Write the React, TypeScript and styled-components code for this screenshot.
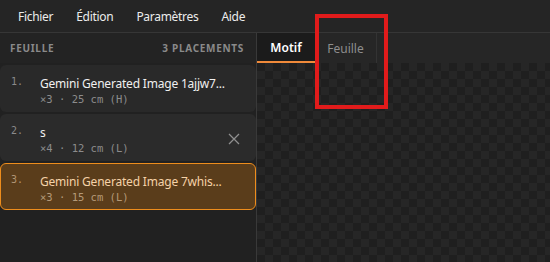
import React from "react";
import styled, { createGlobalStyle, css } from "styled-components";

interface Placement {
  id: number;
  name: string;
  count: number;
  size: number;
  axis: "H" | "L";
}

const placements: Placement[] = [
  { id: 1, name: "Gemini Generated Image 1ajjw7...", count: 3, size: 25, axis: "H" },
  { id: 2, name: "s", count: 4, size: 12, axis: "L" },
  { id: 3, name: "Gemini Generated Image 7whis...", count: 3, size: 15, axis: "L" },
];

const menus = ["Fichier", "Édition", "Paramètres", "Aide"];

function CloseIcon() {
  return (
    <svg width="12" height="12" viewBox="0 0 12 12">
      <path d="M1 1L11 11M11 1L1 11" stroke="#8f8f8f" strokeWidth="1.3" fill="none" />
    </svg>
  );
}

function App() {
  return (
    <>
      <GlobalStyle />
      <Shell>
        <MenuBar>
          {menus.map((m) => (
            <MenuItem key={m}>{m}</MenuItem>
          ))}
        </MenuBar>
        <Body>
          <SidePanel>
            <PanelHeader>
              <span>Feuille</span>
              <span>3 placements</span>
            </PanelHeader>
            <List>
              {placements.map((p) => (
                <Card key={p.id} $selected={p.id === 3} $hover={p.id === 2}>
                  <Index $selected={p.id === 3}>{p.id}.</Index>
                  <Info>
                    <Title $selected={p.id === 3}>{p.name}</Title>
                    <Meta $selected={p.id === 3}>
                      ×{p.count} · {p.size} cm ({p.axis})
                    </Meta>
                  </Info>
                  {p.id === 2 && (
                    <RemoveBtn>
                      <CloseIcon />
                    </RemoveBtn>
                  )}
                </Card>
              ))}
            </List>
          </SidePanel>
          <Main>
            <Tabs>
              <Tab $active>Motif</Tab>
              <Tab>Feuille</Tab>
            </Tabs>
            <Canvas />
          </Main>
        </Body>
        <Annotation />
      </Shell>
    </>
  );
}

export default App;

const GlobalStyle = createGlobalStyle`
  body {
    margin: 0;
    background: #1f1f1f;
    font-family: "Noto Sans", "Open Sans", sans-serif;
  }
`;

const Shell = styled.div`
  position: relative;
  height: 262px;
  display: flex;
  flex-direction: column;
  overflow: hidden;
`;

const MenuBar = styled.div`
  height: 32px;
  flex-shrink: 0;
  display: flex;
  align-items: center;
  gap: 23px;
  padding-left: 18px;
  background: #252525;
  border-bottom: 1px solid #363636;
`;

const MenuItem = styled.div`
  font-size: 12px;
  letter-spacing: -0.3px;
  color: #ececec;
`;

const Body = styled.div`
  flex: 1;
  display: flex;
  min-height: 0;
`;

const SidePanel = styled.div`
  width: 256px;
  flex-shrink: 0;
  display: flex;
  flex-direction: column;
  background: #212121;
  border-right: 1px solid #393939;
`;

const PanelHeader = styled.div`
  height: 30px;
  flex-shrink: 0;
  display: flex;
  align-items: center;
  justify-content: space-between;
  padding: 0 12px 0 10px;
  background: #232323;
  font-size: 10px;
  font-weight: 700;
  letter-spacing: 0.07em;
  text-transform: uppercase;
  color: #8a8a8a;
`;

const List = styled.div`
  display: flex;
  flex-direction: column;
  gap: 2px;
  padding-top: 2px;
`;

const Card = styled.div<{ $selected?: boolean; $hover?: boolean }>`
  height: 47px;
  box-sizing: border-box;
  display: flex;
  align-items: flex-start;
  padding: 9px 14px 0 10px;
  border-radius: 6px;
  background: ${(p) => (p.$hover ? "#2b2b2b" : "#292929")};
  border: 1px solid transparent;
  ${(p) =>
    p.$selected &&
    css`
      background: #5a3d1b;
      border-color: #ee8d1c;
    `}
`;

const Index = styled.div<{ $selected?: boolean }>`
  width: 29px;
  flex-shrink: 0;
  font-family: "DejaVu Sans Mono", monospace;
  font-size: 10px;
  line-height: 14px;
  color: ${(p) => (p.$selected ? "#b09474" : "#8a8a8a")};
`;

const Info = styled.div`
  flex: 1;
  min-width: 0;
  display: flex;
  flex-direction: column;
`;

const Title = styled.div<{ $selected?: boolean }>`
  font-size: 12px;
  letter-spacing: -0.2px;
  line-height: 17px;
  color: ${(p) => (p.$selected ? "#f5d2a8" : "#f0f0f0")};
  white-space: nowrap;
`;

const Meta = styled.div<{ $selected?: boolean }>`
  font-family: "DejaVu Sans Mono", monospace;
  font-size: 10.5px;
  line-height: 15px;
  color: ${(p) => (p.$selected ? "#b59a78" : "#8c8c8c")};
`;

const RemoveBtn = styled.button`
  align-self: center;
  width: 14px;
  height: 14px;
  margin-top: -6px;
  padding: 0;
  display: flex;
  align-items: center;
  justify-content: center;
  border: none;
  background: none;
`;

const Main = styled.div`
  flex: 1;
  display: flex;
  flex-direction: column;
  min-width: 0;
`;

const Tabs = styled.div`
  height: 30px;
  flex-shrink: 0;
  display: flex;
  background: #262626;
`;

const Tab = styled.div<{ $active?: boolean }>`
  box-sizing: border-box;
  height: 100%;
  display: flex;
  align-items: center;
  justify-content: center;
  padding: 0 14px;
  font-size: 12px;
  ${(p) =>
    p.$active
      ? css`
          width: 58px;
          background: #1b1b1b;
          color: #ffffff;
          font-weight: 600;
          border-bottom: 2px solid #f08a3a;
        `
      : css`
          width: 62px;
          color: #8e8e8e;
          border-right: 1px solid #333333;
        `}
`;

const Canvas = styled.div`
  flex: 1;
  background-color: #1f1f1f;
  background-image: conic-gradient(
    #262626 0 25%,
    #1f1f1f 0 50%,
    #262626 0 75%,
    #1f1f1f 0
  );
  background-size: 16px 16px;
`;

const Annotation = styled.div`
  position: absolute;
  left: 315px;
  top: 14px;
  width: 73px;
  height: 95px;
  box-sizing: border-box;
  border: 4px solid #e11b1b;
  pointer-events: none;
`;
